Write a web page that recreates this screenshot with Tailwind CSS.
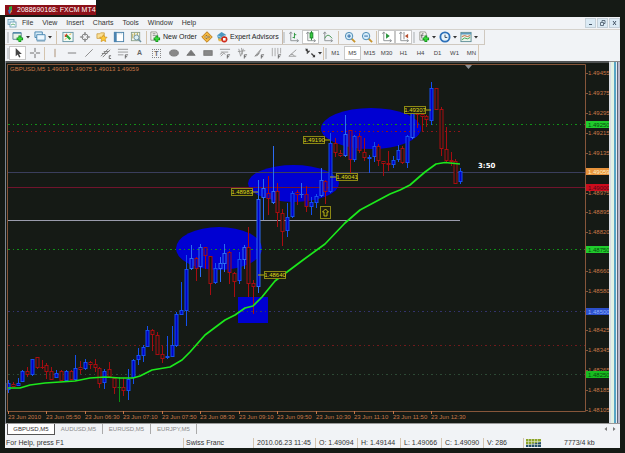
<!DOCTYPE html>
<html lang="en">
<head>
<meta charset="utf-8">
<title>2088690168: FXCM MT4</title>
<script src="https://cdn.jsdelivr.net/npm/@tailwindcss/browser@4"></script>
</head>
<body class="bg-[#151a15] min-h-screen font-['Liberation_Sans',sans-serif] text-[7px] leading-[10px] text-[#333] overflow-hidden">
<header class="flex w-24 h-[15px] bg-white pl-[5px] pt-[5px]">
  <h1 class="flex flex-1 min-w-0 overflow-hidden items-center gap-[2px] bg-[#8c1018] text-white whitespace-nowrap">
    <svg class="w-[9px] h-[10px] ml-[1px] shrink-0" viewBox="0 0 9 10"><path d="M3 2l3-1v4l-3 2z" fill="#2fae3c"/><path d="M2 5l3-1v4l-2 1z" fill="#2d6cc8"/><path d="M5 5l1 1-2 3z" fill="#e8c030"/></svg>2088690168: FXCM MT4
  </h1>
</header>
<main class="ml-[5px] mr-[5px] mt-[2px] bg-[#f1f3f6]">
  <nav class="flex items-center h-[12px]" aria-label="Main menu">
    <svg class="w-[10px] h-[10px] ml-[2px] mr-[5px]" viewBox="0 0 10 10"><rect x="1" y="1.500" width="6" height="5" fill="#d8ecf6" stroke="#6aa0b8" stroke-width=".8"/><rect x="3" y="4" width="6" height="5" fill="#fff" stroke="#5c96b0" stroke-width=".8"/><path d="M4 7l2-1 2 1" stroke="#38a060" fill="none" stroke-width=".8"/></svg>
    <div class="flex gap-[9px]"><button>File</button><button>View</button><button>Insert</button><button>Charts</button><button>Tools</button><button>Window</button><button>Help</button></div>
    <div class="flex ml-auto gap-px text-[#557]">
      <button aria-label="Minimize" class="w-[11px] h-[10px] bg-[#dbeaf4] border border-[#c4d0d8]"><svg viewBox="0 0 9 8"><path d="M3 5.500h3" stroke="#456"/></svg></button>
      <button aria-label="Restore" class="w-[11px] h-[10px] bg-[#dbeaf4] border border-[#c4d0d8]"><svg viewBox="0 0 9 8"><path d="M4 3V1.500h3v3H6M2.500 3.500h3v3h-3z" stroke="#456" fill="none" stroke-width=".8"/></svg></button>
      <button aria-label="Close" class="w-[11px] h-[10px] bg-[#dbeaf4] border border-[#c4d0d8]"><svg viewBox="0 0 9 8"><path d="M3 2l3 4M6 2L3 6" stroke="#456"/></svg></button>
    </div>
  </nav>
  <div class="border-t border-[#d5d2cc]">
    <div id="bar1" class="flex items-center h-[15px] w-[480px] border-r border-b border-[#cfc8bf] pl-[2px]" role="toolbar" aria-label="Standard"></div>
  </div>
  <div id="bar2" class="flex items-center h-[16px] w-[474px] border-r border-[#d8c8b4] pl-[2px]" role="toolbar" aria-label="Line studies"></div>
  <section class="flex bg-[#151a15]" aria-label="GBPUSD,M5 chart">
    <svg id="chart" class="flex-1 min-w-0 h-auto" viewBox="5 61 604 362" font-family="Liberation Sans, sans-serif" font-size="6"></svg>
    <div class="flex w-[11px] shrink-0 border-t border-[#888]">
      <div class="w-[2px] bg-[#d8dce4]"></div><div class="w-[3px] bg-[#e2f2e4]"></div><div class="w-[2px] bg-[#56a4c4]"></div><div class="w-px bg-[#e8eef4]"></div><div class="w-px bg-[#5c6678]"></div><div class="flex-1 bg-[#b8b8ca]"></div>
    </div>
  </section>
  <div class="flex items-start h-[14px] border-t border-[#999] pl-[2px] text-[6px] text-[#888]" role="tablist">
    <button role="tab" aria-selected="true" class="w-[48px] h-[11px] bg-white border border-t-0 border-[#555] text-[#333]">GBPUSD,M5</button>
    <button role="tab" class="w-[48px] h-[10px] border-r border-[#aaa]">AUDUSD,M5</button>
    <button role="tab" class="w-[48px] h-[10px] border-r border-[#aaa]">EURUSD,M5</button>
    <button role="tab" class="w-[46px] h-[10px] border-r border-[#aaa]">EURJPY,M5</button>
    <div class="flex ml-auto gap-[4px] mr-[3px] pt-[2px]">
      <button aria-label="Previous tab"><svg class="w-[5px] h-[6px]" viewBox="0 0 5 6"><path d="M4 1v4L1.500 3z" fill="#777"/></svg></button>
      <button aria-label="Next tab"><svg class="w-[5px] h-[6px]" viewBox="0 0 5 6"><path d="M1 1v4l2.500-2z" fill="#777"/></svg></button>
    </div>
  </div>
  <footer class="flex items-center h-[11px] whitespace-nowrap">
    <div class="flex-1 pl-px">For Help, press F1</div>
    <div class="w-[70px] pl-[2px] border-l border-[#d4c4b0]">Swiss Franc</div>
    <div class="w-[62px] pl-[3px] border-l border-[#d4c4b0]">2010.06.23 11:45</div>
    <div class="w-[42px] pl-[3px] border-l border-[#d4c4b0]">O: 1.49094</div>
    <div class="w-[43px] pl-[3px] border-l border-[#d4c4b0]">H: 1.49144</div>
    <div class="w-[41px] pl-[3px] border-l border-[#d4c4b0]">L: 1.49066</div>
    <div class="w-[42px] pl-[3px] border-l border-[#d4c4b0]">C: 1.49090</div>
    <div class="w-[40px] pl-[3px] border-l border-[#d4c4b0]">V: 286</div>
    <div class="flex items-center w-[97px] pl-[2px] border-l border-[#d4c4b0]">
      <svg class="w-[15px] h-[8px] mr-[23px]" viewBox="0 0 15 8"><path d="M0 0h15v3L0 6z" fill="#8ca428"/><path d="M0 6l15-3v5H0z" fill="#28506c"/><path d="M2.500 0v8M5.500 0v8M8.500 0v8M11.500 0v8M0 2.500h15M0 5.500h15" stroke="#dfe8d0" stroke-width=".6"/></svg>7773/4 kb
    </div>
  </footer>
</main>
<script>
const axes = '<path d="M3 1v9.500h8M1.500 3L3 1l1.500 2M9.500 9l2 1.500-2 1.500" fill="none" stroke="#8a8f92"/>';
const page = '<path d="M2 1h6l1 2v7H2z" fill="#f4f4f0" stroke="#8c8c84" stroke-width=".9"/>';
const plus = '<path d="M8.500 5v7M5 8.500h7" stroke="#128a1c" stroke-width="3"/><path d="M8.500 6v5M6 8.500h5" stroke="#38dc38" stroke-width="1.600"/>';
const icons = {
  newchart: '<path d="M1 2h9v7H1z" fill="#e8f2e8" stroke="#5c8494"/><path d="M1 2h9" stroke="#4884a8" stroke-width="1.500"/>' + plus,
  profiles: '<path d="M1 1h8v6H1z" fill="#d8ecf8" stroke="#4484b0"/><path d="M3 4h9v6H3z" fill="#eef8ff" stroke="#4484b0"/><path d="M3 11h9" stroke="#88a8bc"/>',
  market: '<rect x="1" y="1.500" width="11" height="10" fill="#f4fbf4" stroke="#6494a4"/><path d="M3 4l2 2M5 3v3H3" stroke="#d83c20" stroke-width="1.200" fill="none"/><path d="M5 5l4 4" stroke="#28a43c" stroke-width="2.400"/><path d="M8 4l2-1M3 9l2-1" stroke="#e0ac30"/>',
  target: '<circle cx="6.500" cy="6.500" r="3.300" fill="none" stroke="#777"/><path d="M6.500 1v4M6.500 8v4M1 6.500h4M8 6.500h4" stroke="#777" stroke-width="1.200"/>',
  folder: '<path d="M1 3h3l1-1h4v6H1z" fill="#fae098" stroke="#c89838" stroke-width=".8"/><path d="M8 4l1.200 2.500 2.800.3-2 2 .6 2.700L8 10.200 5.500 11.500 6 8.800l-2-2 2.800-.3z" fill="#fcc838" stroke="#c88c18" stroke-width=".7"/>',
  panel: '<rect x="1.500" y="1.500" width="10" height="10" fill="#fff" stroke="#4880a8"/><rect x="1" y="1" width="3" height="11" fill="#4c84b0"/><path d="M5 3h6" stroke="#98bcd4" stroke-dasharray="1 1"/>',
  tester: '<rect x="1.500" y="1.500" width="9" height="9" fill="#f2f6ea" stroke="#8ca08c"/><path d="M3 3v5M5 2v5M8 2v3" stroke="#b8a850"/><circle cx="7" cy="7" r="2.700" fill="#dceef4" stroke="#6c90a0"/><path d="M9 9l3 3" stroke="#6c90a0" stroke-width="1.500"/>',
  order: page + '<path d="M4 3h3M4 5h3" stroke="#888"/>' + plus,
  diamond: '<path d="M6.500 0.800l5.700 5.700-5.700 5.700L.8 6.500z" fill="#f4b840" stroke="#b87818"/><path d="M4 6.500l2-2v1.300h3v1.400H6v1.300z" fill="#fff4d0" stroke="#704810" stroke-width=".6"/>',
  expert: '<path d="M1 5l5-4 5 3-4 5-4 1z" fill="#4c98c0"/><path d="M1 5l5 2 5-3" stroke="#a8d4e8" fill="none"/><path d="M2 8h4v3H3z" fill="#e8b848"/><circle cx="9" cy="9" r="3.400" fill="#d02c1c"/><rect x="7.600" y="7.600" width="2.800" height="2.800" fill="#fff"/>',
  bars: axes + '<path d="M7 2v6M7 4h2M5 7h2" stroke="#28943c"/>',
  candles: axes + '<path d="M7 0v10" stroke="#188428"/><rect x="5.500" y="2" width="3" height="5.500" fill="#38cc40" stroke="#188428"/>',
  line: axes + '<path d="M3 8q3-7 8 0" fill="none" stroke="#489454"/>',
  zin: '<path d="M8 8l4 4" stroke="#c8942c" stroke-width="2"/><circle cx="5.500" cy="5.500" r="4" fill="#d4ecfa" stroke="#4484b0"/><path d="M3.500 5.500h4M5.500 3.500v4" stroke="#2460a0"/>',
  zout: '<path d="M8 8l4 4" stroke="#c8942c" stroke-width="2"/><circle cx="5.500" cy="5.500" r="4" fill="#d4ecfa" stroke="#4484b0"/><path d="M3.500 5.500h4" stroke="#2460a0"/>',
  scroll: axes + '<path d="M5.500 2.500v6l4-3z" fill="#28943c"/>',
  shift: axes + '<path d="M6.500 1v8" stroke="#888"/><path d="M11 3v5L7.500 5.500z" fill="#b85030"/>',
  indic: page + '<path d="M6 3q-2-1-2 2v3M3 5h3" fill="none" stroke="#555" stroke-width=".8"/>' + plus,
  clock: '<circle cx="6.500" cy="6.500" r="5" fill="#e8f4fc" stroke="#2c70b8" stroke-width="2"/><path d="M6.500 4v3H9" fill="none" stroke="#345"/>',
  template: '<rect x="1" y="1.500" width="11" height="10" fill="#eaf4ea" stroke="#5c8c94"/><path d="M1 3h11" stroke="#5494bc" stroke-width="1.500"/><path d="M2 6l3-1 3 1 3-1" stroke="#c05c30" fill="none"/><path d="M2 9.500l3-2 3 1 3-1.500" stroke="#34a048" fill="none"/>',
  cursor: '<path d="M4 1v9l2.200-2 1.500 3.500 1.500-.8L7.700 7.500h3z" fill="#444"/>',
  cross: '<path d="M6.500 1v4.500M6.500 7.500V12M1 6.500h4.500M7.500 6.500H12" stroke="#666"/>',
  vline: '<path d="M6.500 2v9" stroke="#a88c70"/>',
  hline: '<path d="M2 6.500h9" stroke="#777"/>',
  trend: '<path d="M2.500 10.500l8-8" stroke="#888"/>',
  channel: '<path d="M1 10l8-8M3 11l8-8M2 7h6M4 5h6" stroke="#777"/><path d="M12 9.500h-2v3h2" stroke="#555" fill="none" stroke-width=".9"/>',
  fibo: '<path d="M1 2.500h11M1 5.500h11M1 8.500h6" stroke="#999"/><path d="M9 12.500v-4h3M9 10.500h2" stroke="#555" fill="none" stroke-width=".9"/>',
  ellipse: '<ellipse cx="6.500" cy="6.500" rx="4.700" ry="3.300" fill="#888" stroke="#777"/>',
  tri: '<path d="M6.500 3.500L11 9H2z" fill="#777" stroke="#777"/>',
  rect: '<rect x="2" y="4" width="9" height="5" fill="#888" stroke="#777"/>',
  fan: '<path d="M1 2.500h11M2 5.500h8M1 8l3-2 3 2M2 10l3-3" stroke="#999" fill="none"/><path d="M9 12.500v-4h3M9 10.500h2" stroke="#555" fill="none" stroke-width=".9"/>',
  fork: '<path d="M3 2l2 8M6 1l1 7M2 5l8-1M8 2L5 10" stroke="#999" fill="none"/><path d="M9 12.500v-4h3M9 10.500h2" stroke="#555" fill="none" stroke-width=".9"/>',
  gann: '<path d="M2 10l7-8M2 10l5-3M4 10l4-6" stroke="#888" fill="none"/><path d="M9 12.500v-4h3M9 10.500h2" stroke="#555" fill="none" stroke-width=".9"/>',
  zones: '<path d="M2.500 1v9M5.500 1v9M8.500 1v7M11.500 1v6" stroke="#a8a8a8"/><path d="M9 12.500v-4h3M9 10.500h2" stroke="#555" fill="none" stroke-width=".9"/>',
  angle: '<path d="M2 10l8-7M2 10h8M4 8q3-1 4 2" stroke="#999" fill="none"/>',
  arrows: '<path d="M2 3l3 3M3 7l3-3M8 7l3 3" stroke="#444" stroke-width="1.400"/><path d="M1 2h3v3zM9 11h3V8z" fill="#333"/>'
};
const hit = ' hover:bg-[#dfe8f0] ';
const pressedStyle = 'bg-white outline outline-[#c8c8c8] -outline-offset-1';
function icon(name, pressed) {
  return `<button aria-label="${name}" class="flex justify-center items-center w-[17px] h-[14px] shrink-0 ${pressed ? pressedStyle : hit}"><svg class="w-[12px] h-[12px]" viewBox="0 0 13 13">${icons[name]}</svg></button>`;
}
const caret = '<button aria-label="More" class="w-[4px] shrink-0"><svg class="w-[4px] h-[4px]" viewBox="0 0 4 4"><path d="M0 1h4L2 3.500z" fill="#333"/></svg></button>';
const sep = '<span class="w-px h-[13px] bg-[#d4c4ae] mx-[2px] shrink-0"></span>';
const thinSep = '<span class="w-px h-[13px] bg-[#d4c4ae] mx-px shrink-0"></span>';
const grip = '<span class="w-[2px] h-[11px] bg-[#cdd1d4] shrink-0"></span>';
function label(t) { return `<button class="text-[6px] text-center w-[17px] h-[14px] shrink-0 text-[#444] ${t === 'M5' ? pressedStyle : hit}">${t}</button>`; }
function wide(name, t, w) {
  return `<button class="flex items-center gap-[2px] shrink-0 whitespace-nowrap text-[#222] ${w}"><svg class="w-[12px] h-[12px] shrink-0" viewBox="0 0 13 13">${icons[name]}</svg>${t}</button>`;
}
document.getElementById('bar1').innerHTML =
  grip + icon('newchart') + caret + '<span class="w-px"></span>' + icon('profiles') + caret + '<span class="w-[2px]"></span>' + sep +
  ['market','target','folder','panel','tester'].map(n => icon(n)).join('') + sep +
  wide('order', 'New Order', 'w-[49px]') + icon('diamond') + '<span class="w-px"></span>' + wide('expert', 'Expert Advisors', 'w-[66px]') +
  '<span class="w-px h-[14px] bg-[#c8b8a8] shrink-0"></span>' + grip + icon('bars') + icon('candles', 1) + icon('line') + sep +
  icon('zin') + icon('zout') + thinSep + icon('scroll', 1) + icon('shift', 1) + '<span class="w-px"></span>' + grip +
  icon('indic') + caret + icon('clock') + caret + icon('template') + caret;
function letter(t, box) {
  return `<button class="flex justify-center items-center w-[17px] h-[14px] shrink-0 text-[#666] font-bold"><span class="${box}">${t}</span></button>`;
}
document.getElementById('bar2').innerHTML =
  grip + icon('cursor', 1) + icon('cross') + thinSep +
  ['vline','hline','trend','channel','fibo'].map(n => icon(n)).join('') +
  letter('A', '') + letter('T', 'border border-dotted border-[#888] w-[9px] h-[9px] leading-[8px]') +
  ['ellipse','tri','rect','fan','fork','gann','zones','angle','arrows'].map(n => icon(n)).join('') + caret + thinSep + grip +
  ['M1','M5','M15','M30','H1','H4','D1','W1','MN'].map(label).join('');

// One row per five-minute bar: high, low, body top, body bottom, colour key.
const bars = `380 393 383 390 b|382 387 384 387 r|378 386 383 386 b|370 382 371 382 b|367 377 371 375 r|359 376 359 375 b|357 369 357 368 r|360 369 367 368 r|363 379 365 372 r|367 380 371 380 r|370 378 373 378 b|370 381 371 381 r|370 382 371 381 b|370 380 371 380 r|355 380 368 380 b|361 374 367 370 r|359 370 362 369 b|361 369 362 365 r|359 372 364 368 r|367 388 368 384 r|369 389 371 383 b|362 378 369 377 r|377 394 378 388 r|377 402 387 388 g|378 396 387 391 r|369 400 379 391 b|359 384 360 378 b|348 365 355 360 b|345 362 347 356 b|326 347 330 347 b|329 351 330 335 r|332 355 335 355 r|346 363 354 359 r|336 359 356 358 b|326 357 345 357 b|312 347 314 346 b|282 315 310 315 b|255 326 269 311 b|245 270 258 269 b|257 281 258 269 r|244 277 247 267 b|247 269 247 256 r|256 295 256 284 r|263 284 268 283 b|257 282 263 269 b|244 272 253 264 b|251 284 252 273 r|272 297 273 282 r|252 284 259 281 b|245 269 247 260 b|227 297 247 284 r|280 314 283 287 r|180 293 199 287 b|179 220 188 198 b|176 215 193 199 r|146 204 191 203 b|183 227 191 213 r|209 246 213 232 r|203 237 217 231 b|191 218 193 217 b|190 205 192 195 r|183 198 194 195 b|186 212 194 207 r|197 215 202 207 b|194 208 196 203 b|168 197 180 196 b|180 204 181 192 r|133 193 143 192 b|138 157 143 153 r|150 157 153 156 r|115 157 134 156 b|130 175 130 160 r|135 162 136 160 b|133 153 136 151 r|138 161 152 158 r|155 173 157 159 b|142 162 146 157 b|144 166 146 161 r|161 176 161 164 r|151 171 163 165 r|156 168 160 165 b|145 162 150 160 b|146 164 148 163 r|135 168 136 163 b|112 139 112 138 b|112 128 113 115 r|112 131 114 117 r|115 127 116 120 r|82 125 88 121 b|88 110 88 110 r|107 156 109 149 r|127 163 149 161 r|152 166 160 162 r|159 184 161 184 r|168 184 171 182 b`.split('|');
const color = { b: '#1450ee', r: '#a80c10', g: '#0a9010' };
const inside = { b: '#0000c8', r: '#151a15', g: '#151a15' };
const islands = [[219,248.5,43,21.5],[293.5,183.5,45.5,18.5],[371,128.5,50,20.5]];
let s = '<rect x="5" y="61" width="604" height="362" fill="#151a15"/>';
islands.forEach(([x, y, rx, ry]) => s += `<ellipse cx="${x}" cy="${y}" rx="${rx}" ry="${ry}" fill="#0000d2"/>`);
s += '<rect x="238" y="297" width="30" height="26" fill="#0000d2"/>';
function level(y, x2, c, dash) { s += `<path d="M8 ${y}H${x2}" stroke="${c}" ${dash ? 'stroke-dasharray="2 3 1 3"' : ''}/>`; }
level(124.5, 585, '#129018', 1); level(131.5, 460, '#901418', 1); level(172.5, 585, '#3a3e5c'); level(187.5, 585, '#70142c');
level(220.5, 460, '#9a9cac'); level(249.5, 585, '#129018', 1); level(311.5, 585, '#33336c', 1); level(345.5, 585, '#701a1c', 1); level(374.5, 585, '#2c4a34', 1);
bars.forEach((row, i) => {
  const [h, l, t, b, k] = row.split(' ');
  const x = Math.round(8 + i * 4.81) + .5;
  const hollow = islands.some(([cx, cy, rx, ry]) => ((x - cx) / rx) ** 2 + (((+t + +b) / 2 - cy) / ry) ** 2 < 1);
  const stroke = hollow && k === 'b' ? '#2c6cf4' : color[k];
  s += `<path d="M${x} ${h}V${l}" stroke="${stroke}"/>`;
  if (b - t > 1) s += `<rect x="${x - 1.5}" y="${+t + .5}" width="3" height="${b - t - 1}" fill="${hollow ? '#0000c8' : inside[k]}" stroke="${stroke}"/>`;
  else s += `<path d="M${x - 2} ${+t + .5}h4" stroke="${stroke}"/>`;
});
s += '<polyline fill="none" stroke="#1ce81c" stroke-width="1.700" stroke-linejoin="round" points="8,388 20,388 30,385 45,383 75,381 90,378 105,377 120,378 133,378 140,376 152,370 170,367 182,360 190,352 205,335 225,320 235,315 245,308 253,306 262,297 275,281 283,275 303,260 325,244 345,223 360,210 375,202 390,194 400,190 410,185 418,178 425,172 436,164 445,162.500 460,164"/>';
[[404,106,'1.49307',425,431],[303,136,'1.49190',325,330],[336,173,'1.49041',330,336],[231,188,'1.48983',253,258],[264,271,'1.48640',258,264]].forEach(([x, y, t, a, b]) => {
  s += `<path d="M${a} ${y + 4}H${b}" stroke="#b4b010"/><rect x="${x + .5}" y="${y + .5}" width="21" height="7" fill="#1c1c10" stroke="#8c8814"/><text x="${x + 11}" y="${y + 6}" text-anchor="middle" fill="#dcd818">${t}</text>`;
});
s += '<rect x="320.500" y="206.500" width="10" height="12" fill="#1c1c10" stroke="#8c8814"/><path d="M325.500 209l3 3h-1.500v4h-3v-4h-1.500z" fill="none" stroke="#dcd818" stroke-width=".8"/>';
s += '<text x="478" y="168" fill="#fff" font-family="DejaVu Sans, sans-serif" font-weight="bold" font-size="7">3:50</text>';
s += '<path d="M7.500 411.500V64.500H585.500V411.500z" fill="none" stroke="#86563a"/><path d="M5.500 61V423" stroke="#7c8490"/><path d="M5 62H609" stroke="#8a8a90"/><path d="M465 65h7l-3.500 4z" fill="#8a8f94"/>';
[[73,'1.49455'],[93,'1.49375'],[113,'1.49295'],[133,'1.49215'],[153,'1.49135'],[193,'1.48975'],[212,'1.48895'],[232,'1.48820'],[271,'1.48660'],[291,'1.48580'],[330,'1.48425'],[350,'1.48345'],[370,'1.48265'],[390,'1.48185'],[410,'1.48105']].forEach(([y, t]) => {
  s += `<path d="M585 ${y + .5}h3" stroke="#86563a"/><text x="588" y="${y + 2}" fill="#c87848">${t}</text>`;
});
[[124,'1.49250','#20cc2c','#064c0c'],[171,'1.49059','#e8943c','#fff0c0'],[187,'1.49000','#cc0c1c','#4c0818'],[249,'1.48750','#20cc2c','#064c0c'],[311,'1.48500','#2c50cc','#8cb0ff'],[374,'1.48250','#18bc20','#064c0c']].forEach(([y, t, c, f]) => {
  s += `<rect x="586" y="${y - 3}" width="23" height="7" fill="${c}"/><text x="588" y="${y + 3}" fill="${f}">${t}</text>`;
});
['2010','05:50','06:30','07:10','07:50','08:30','09:10','09:50','10:30','11:10','11:50','12:30'].forEach((t, i) => {
  const x = Math.round(7.5 + i * 38.5);
  s += `<path d="M${x + .5} 411v3" stroke="#c87848"/><text x="${x}" y="419" fill="#c87848">23 Jun ${t}</text>`;
});
s += '<text x="10" y="71" fill="#c87848" xml:space="preserve">GBPUSD,M5 1.49019 1.49075 1.49013 1.49059</text>';
document.getElementById('chart').innerHTML = s;
</script>
</body>
</html>
